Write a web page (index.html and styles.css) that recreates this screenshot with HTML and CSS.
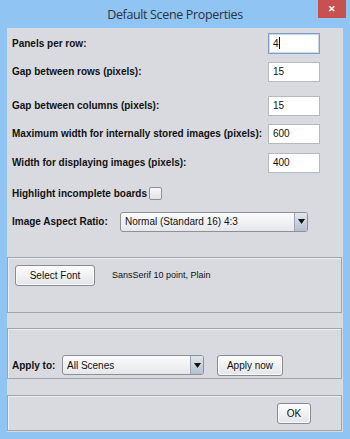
FILE: index.html
```html
<!DOCTYPE html>
<html lang="en">
<head>
  <meta charset="UTF-8">
  <title>Default Scene Properties</title>
  <link rel="stylesheet" href="styles.css">
</head>
<body>
  <div class="window">
    <div class="titlebar">
      <span></span>
      <span class="title">Default Scene Properties</span>
      <span class="close">&#x2715;</span>
    </div>

    <div class="client">
      <div class="props">
        <div class="row r1">
          <label>Panels per row:</label>
          <div class="field focus">4<span class="caret"></span></div>
        </div>
        <div class="row r2">
          <label>Gap between rows (pixels):</label>
          <div class="field">15</div>
        </div>
        <div class="row r3">
          <label>Gap between columns (pixels):</label>
          <div class="field">15</div>
        </div>
        <div class="row r4">
          <label>Maximum width for internally stored images (pixels):</label>
          <div class="field">600</div>
        </div>
        <div class="row r5">
          <label>Width for displaying images (pixels):</label>
          <div class="field">400</div>
        </div>
        <div class="row check-row">
          <label>Highlight incomplete boards</label>
          <span class="checkbox"></span>
        </div>
        <div class="row ratio-row">
          <label>Image Aspect Ratio:</label>
          <div class="combo wide">
            <span class="combo-text">Normal (Standard 16) 4:3</span>
            <span class="combo-arrow"><svg width="7" height="5" viewBox="0 0 7 5"><path d="M0 0h7L3.5 5z" fill="#111"/></svg></span>
          </div>
        </div>
      </div>

      <div class="panel font-panel">
        <button class="btn select-font">Select Font</button>
        <span class="font-info">SansSerif 10 point, Plain</span>
      </div>

      <div class="panel apply-panel">
        <label>Apply to:</label>
        <div class="combo scenes">
          <span class="combo-text">All Scenes</span>
          <span class="combo-arrow"><svg width="7" height="5" viewBox="0 0 7 5"><path d="M0 0h7L3.5 5z" fill="#111"/></svg></span>
        </div>
        <button class="btn apply-now">Apply now</button>
      </div>

      <div class="panel ok-panel">
        <button class="btn ok">OK</button>
      </div>
    </div>
  </div>
</body>
</html>
```

FILE: styles.css
```css
html, body {
  margin: 0;
  padding: 0;
}
body {
  font-family: 'Liberation Sans', Arial, sans-serif;
  font-size: 10px;
  color: #111;
  background: #8fc4f3;
}
.window {
  width: 350px;
  height: 439px;
  background: #8fc4f3;
  display: flex;
  flex-direction: column;
}
.titlebar {
  height: 28px;
  display: grid;
  grid-template-columns: 1fr auto 1fr;
  align-items: start;
}
.title {
  font-family: 'Open Sans', 'Liberation Sans', sans-serif;
  font-size: 12.5px;
  letter-spacing: -0.35px;
  color: #2c3440;
  line-height: 14px;
  margin-top: 8px;
}
.close {
  justify-self: end;
  width: 28px;
  height: 18px;
  margin-right: 4px;
  background: #c75050;
  color: #fff;
  font-size: 9px;
  font-weight: bold;
  text-align: center;
  line-height: 18px;
}
.client {
  flex: 1;
  margin: 0 7px 7px 7px;
  background: #d8dae0;
  display: flex;
  flex-direction: column;
}
.props {
  height: 229px;
  padding: 5px 0 0 5px;
  box-sizing: border-box;
}
label {
  font-weight: bold;
  white-space: nowrap;
}
.row {
  display: grid;
  grid-template-columns: 256px 52px;
  align-items: center;
  height: 21px;
}
.r2 { margin-top: 7px; }
.r3 { margin-top: 13px; }
.r4 { margin-top: 7px; }
.r5 { margin-top: 8px; }
.field {
  height: 20px;
  box-sizing: border-box;
  background: #fff;
  border: 1px solid #b7b9bd;
  padding: 0 0 0 4px;
  line-height: 18px;
  font-size: 10px;
}
.field.focus {
  border-color: #7e9fc2;
  box-shadow: inset 0 0 0 1px #c8d9ea;
  height: 21px;
  line-height: 19px;
}
.caret {
  display: inline-block;
  width: 1px;
  height: 12px;
  background: #111;
  vertical-align: -2px;
}
.check-row {
  grid-template-columns: 137px 13px;
  margin-top: 10px;
}
.checkbox {
  width: 11px;
  height: 11px;
  border: 1px solid #8d8f94;
  border-radius: 2px;
  background: linear-gradient(#f7f7f8, #e3e4e7);
}
.ratio-row {
  grid-template-columns: 108px 188px;
  margin-top: 7px;
}
.combo {
  height: 20px;
  box-sizing: border-box;
  border: 1px solid #8e9094;
  border-radius: 3px;
  background: linear-gradient(#fbfbfc, #e6e7ea);
  display: flex;
  align-items: center;
  overflow: hidden;
}
.combo-text {
  flex: 1;
  padding-left: 4px;
  font-size: 10px;
}
.combo-arrow {
  width: 12px;
  height: 100%;
  border-left: 1px solid #9ca6b2;
  background: linear-gradient(#dfe6ee, #b3c0cf);
  display: flex;
  align-items: center;
  justify-content: center;
}
.panel {
  border: 1px solid #a2a4a9;
  box-shadow: inset 1px 1px 0 #eceef2;
  margin-right: 1px;
  display: flex;
  align-items: flex-start;
  box-sizing: border-box;
}
.btn {
  font-family: 'Liberation Sans', Arial, sans-serif;
  font-size: 10px;
  color: #111;
  height: 21px;
  padding: 0;
  border: 1px solid #8a8c90;
  border-radius: 3px;
  background: linear-gradient(#fdfdfd, #e4e5e8);
  box-shadow: inset 0 0 0 1px #fafafa;
}
.font-panel {
  height: 56px;
  padding: 7px 0 0 7px;
}
.select-font {
  width: 80px;
}
.font-info {
  font-size: 9px;
  margin: 5px 0 0 17px;
}
.apply-panel {
  height: 51px;
  margin-top: 15px;
  padding: 23px 0 0 4px;
  align-items: center;
}
.apply-panel label {
  width: 50px;
}
.scenes {
  width: 142px;
}
.apply-now {
  width: 66px;
  margin-left: 13px;
}
.ok-panel {
  height: 36px;
  margin-top: 16px;
  padding: 7px 30px 0 0;
  justify-content: flex-end;
}
.ok {
  width: 34px;
}
```
